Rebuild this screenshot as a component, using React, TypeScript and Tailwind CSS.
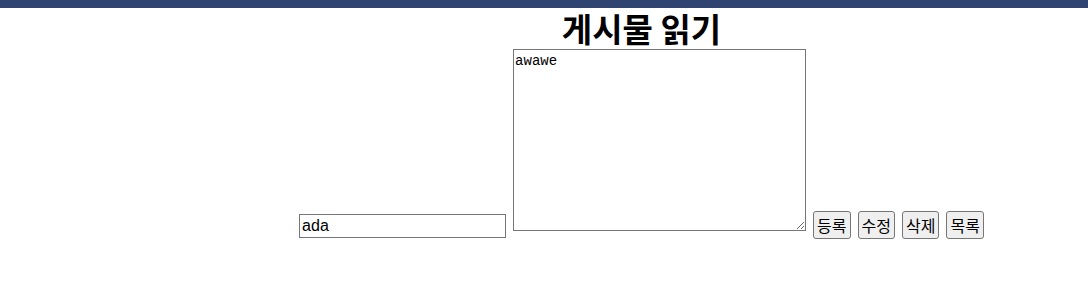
import React from "react";

export default function App() {
  const btn =
    "h-[28px] px-[3px] border border-[#767676] rounded-[3px] bg-[#efefef] text-[16px] leading-[20px] text-black [font-family:'Noto_Sans_CJK_KR','Liberation_Sans',sans-serif]";
  return (
    <div className="w-[1088px] h-[290px] bg-white [font-family:'Liberation_Sans','Noto_Sans_CJK_KR',sans-serif]">
      <div className="h-[8px] bg-[#2f4470]" />
      <div className="pl-[195px]">
        <h1 className="text-center text-[33px] leading-[41px] font-bold text-black [font-family:'Noto_Sans_CJK_KR',sans-serif]">
          게시물 읽기
        </h1>
        <div className="flex items-end justify-center gap-[7px]">
          <input
            readOnly
            value="ada"
            className="w-[207px] h-[24px] mb-[1px] px-[2px] border border-[#767676] text-[16px] text-black outline-none [font-family:'Liberation_Sans',sans-serif]"
          />
          <textarea
            readOnly
            value="awawe"
            className="w-[293px] h-[182px] mb-[8px] px-[1px] pt-[2px] border border-[#767676] text-[14px] leading-[18px] text-black outline-none [font-family:'Liberation_Mono',monospace]"
          />
          <button className={btn}>등록</button>
          <button className={btn}>수정</button>
          <button className={btn}>삭제</button>
          <button className={btn}>목록</button>
        </div>
      </div>
    </div>
  );
}
